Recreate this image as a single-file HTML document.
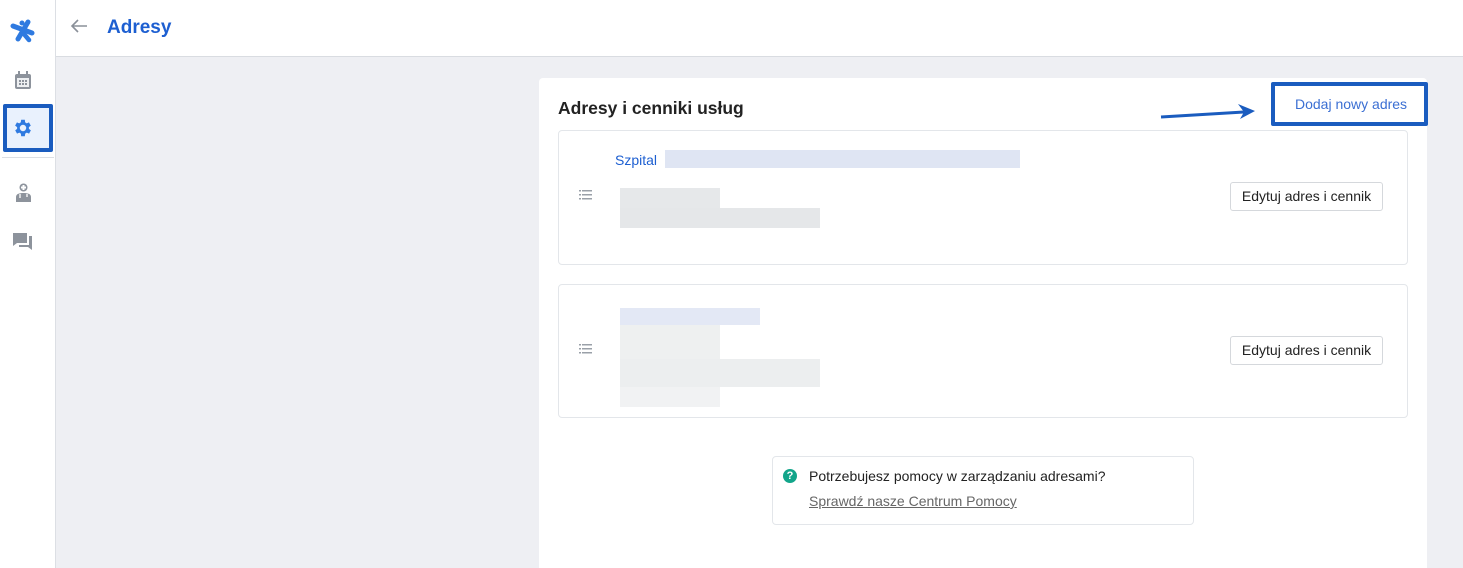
<!DOCTYPE html><html><head><meta charset="utf-8"><style>
*{box-sizing:border-box;margin:0;padding:0}
html,body{width:1463px;height:568px;overflow:hidden}
body{background:#eeeff3;font-family:"Liberation Sans",sans-serif;position:relative}
.abs{position:absolute}
.side{left:0;top:0;width:56px;height:568px;background:#fff;border-right:1px solid #dcdfe4}
.head{left:56px;top:0;width:1407px;height:57px;background:#fff;border-bottom:1px solid #d9dce1}
.card{left:539px;top:78px;width:888px;height:490px;background:#fff;border-radius:4px 4px 0 0}
.box{background:#fff;border:1px solid #e3e6ea;border-radius:4px}
.btn{border:1px solid #d5d8dc;border-radius:3px;background:#fff;font-size:14px;color:#222;text-align:center;line-height:27px}
</style></head><body>
<div class="abs side"></div>
<svg class="abs" style="left:10px;top:19px" width="26" height="24" viewBox="0 0 26 24"><path d="M3 7 L22 14" stroke="#2f7ae0" stroke-width="5" stroke-linecap="round"/><path d="M18 3 L8 20" stroke="#2f7ae0" stroke-width="5" stroke-linecap="round"/><circle cx="12" cy="4" r="2.5" fill="#2f7ae0"/><path d="M14 15 L19 21" stroke="#2f7ae0" stroke-width="4.5" stroke-linecap="round"/></svg>
<svg class="abs" style="left:14px;top:71px" width="18" height="19" viewBox="0 0 18 19"><rect x="1" y="3" width="16" height="15" rx="2" fill="#8d939c"/><rect x="4" y="0" width="2" height="4" fill="#8d939c"/><rect x="12" y="0" width="2" height="4" fill="#8d939c"/><rect x="3" y="7" width="12" height="9" fill="#eef0f2"/><g fill="#8d939c"><rect x="5" y="9" width="2" height="2"/><rect x="8" y="9" width="2" height="2"/><rect x="11" y="9" width="2" height="2"/><rect x="5" y="12" width="2" height="2"/><rect x="8" y="12" width="2" height="2"/><rect x="11" y="12" width="2" height="2"/></g></svg>
<div class="abs" style="left:3px;top:104px;width:50px;height:48px;border:4px solid #1a5cbf;background:#e9f1fd;border-radius:2px"></div>
<svg class="abs" style="left:12px;top:117px" width="22" height="22" viewBox="0 0 24 24"><path fill="#2f7ae0" d="M19.4 13a7.5 7.5 0 0 0 0-2l2.1-1.6-2-3.5-2.5 1a7 7 0 0 0-1.7-1L15 3h-4l-.4 2.9a7 7 0 0 0-1.7 1l-2.5-1-2 3.5L6.6 11a7.5 7.5 0 0 0 0 2l-2.1 1.6 2 3.5 2.5-1a7 7 0 0 0 1.7 1L11 21h4l.4-2.9a7 7 0 0 0 1.7-1l2.5 1 2-3.5zM13 15.5a3.5 3.5 0 1 1 0-7 3.5 3.5 0 0 1 0 7z" transform="translate(-1 0)"/></svg>
<div class="abs" style="left:2px;top:157px;width:52px;height:1px;background:#dcdfe4"></div>
<svg class="abs" style="left:15px;top:183px" width="17" height="19" viewBox="0 0 17 19"><circle cx="8.5" cy="4.5" r="4" fill="#8d939c"/><rect x="7.5" y="2" width="2" height="5" fill="#fff"/><rect x="6" y="3.5" width="5" height="2" fill="#fff"/><path d="M1 19v-5c0-3 3-4 7.5-4s7.5 1 7.5 4v5z" fill="#8d939c"/><path d="M5 11v4M12 11v3" stroke="#fff" stroke-width="1.3"/></svg>
<svg class="abs" style="left:13px;top:232px" width="21" height="19" viewBox="0 0 21 19"><path d="M0 1h14v10H4l-4 3z" fill="#8d939c"/><path d="M6 13h10V4h3v14l-4-3H6z" fill="#8d939c"/></svg>
<div class="abs head"></div>
<svg class="abs" style="left:70px;top:18px" width="18" height="16" viewBox="0 0 18 16"><path d="M17 8H2M8 2L2 8l6 6" stroke="#8a9099" stroke-width="1.6" fill="none"/></svg>
<div class="abs" style="left:107px;top:17px;font-size:19px;font-weight:bold;color:#1d5fd1">Adresy</div>
<div class="abs card"></div>
<div class="abs" style="left:558px;top:98px;font-size:17.5px;font-weight:bold;color:#222">Adresy i cenniki usług</div>
<svg class="abs" style="left:1158px;top:101px" width="100" height="22" viewBox="0 0 100 22"><path d="M3 16 L86 11" stroke="#1a5cbf" stroke-width="3"/><path d="M80 3 L97 10 L82 18 L86 11Z" fill="#1a5cbf"/></svg>
<div class="abs" style="left:1271px;top:82px;width:157px;height:44px;border:4px solid #1a5cbf;border-radius:2px;background:#fff;font-size:14px;color:#3b6fd3;line-height:36px;padding-left:20px">Dodaj nowy adres</div>
<div class="abs box" style="left:558px;top:130px;width:850px;height:135px"></div>
<div class="abs box" style="left:558px;top:284px;width:850px;height:134px"></div>
<svg class="abs" style="left:579px;top:190px" width="13" height="10" viewBox="0 0 13 10"><g fill="#9aa0a8"><rect x="0" y="0" width="2" height="1.5"/><rect x="3" y="0" width="10" height="1.5"/><rect x="0" y="4" width="2" height="1.5"/><rect x="3" y="4" width="10" height="1.5"/><rect x="0" y="8" width="2" height="1.5"/><rect x="3" y="8" width="10" height="1.5"/></g></svg>
<svg class="abs" style="left:579px;top:344px" width="13" height="10" viewBox="0 0 13 10"><g fill="#9aa0a8"><rect x="0" y="0" width="2" height="1.5"/><rect x="3" y="0" width="10" height="1.5"/><rect x="0" y="4" width="2" height="1.5"/><rect x="3" y="4" width="10" height="1.5"/><rect x="0" y="8" width="2" height="1.5"/><rect x="3" y="8" width="10" height="1.5"/></g></svg>
<div class="abs" style="left:615px;top:152px;font-size:14px;color:#1d5fd1">Szpital</div>
<div class="abs" style="left:665px;top:150px;width:355px;height:18px;background:#dfe5f3"></div>
<div class="abs" style="left:620px;top:188px;width:100px;height:20px;background:#e6e8ea"></div>
<div class="abs" style="left:620px;top:208px;width:200px;height:20px;background:#e5e7e9"></div>
<div class="abs" style="left:620px;top:308px;width:140px;height:17px;background:#e3e8f5"></div>
<div class="abs" style="left:620px;top:325px;width:100px;height:40px;background:#eef0f0"></div>
<div class="abs" style="left:620px;top:359px;width:200px;height:28px;background:#eceeef"></div>
<div class="abs" style="left:620px;top:387px;width:100px;height:20px;background:#f1f2f3"></div>
<div class="abs btn" style="left:1230px;top:182px;width:153px;height:29px">Edytuj adres i cennik</div>
<div class="abs btn" style="left:1230px;top:336px;width:153px;height:29px">Edytuj adres i cennik</div>
<div class="abs box" style="left:772px;top:456px;width:422px;height:69px"></div>
<div class="abs" style="left:783px;top:469px;width:14px;height:14px;border-radius:50%;background:#12a58a;color:#fff;font-size:11px;font-weight:bold;text-align:center;line-height:14px">?</div>
<div class="abs" style="left:809px;top:468px;font-size:14px;color:#222">Potrzebujesz pomocy w zarządzaniu adresami?</div>
<div class="abs" style="left:809px;top:493px;font-size:14px;color:#666;text-decoration:underline">Sprawdź nasze Centrum Pomocy</div>
</body></html>
